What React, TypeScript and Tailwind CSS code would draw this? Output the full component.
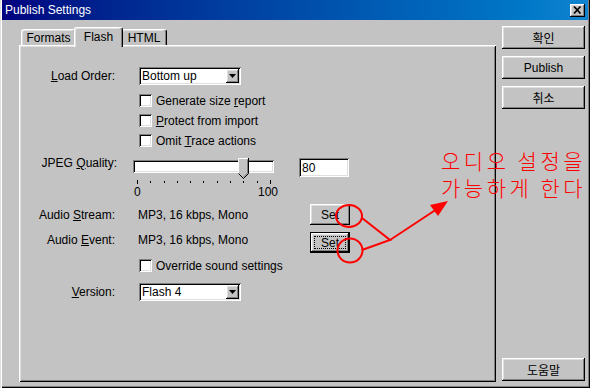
import type { ReactNode } from "react";

const RAISED =
  "shadow-[inset_-1px_-1px_#000,inset_1px_1px_#fff,inset_-2px_-2px_#808080,inset_2px_2px_#dfdfdf]";
const SUNKEN =
  "shadow-[inset_1px_1px_#808080,inset_-1px_-1px_#fff,inset_2px_2px_#000,inset_-2px_-2px_#dfdfdf]";

function WinButton({ children, ko = false }: { children: ReactNode; ko?: boolean }) {
  return (
    <button
      type="button"
      className={`flex h-[23px] w-[83px] items-center justify-center bg-[#c3c3c3] text-[12px] text-black ${RAISED} ${
        ko ? "font-['Noto_Sans_CJK_KR',sans-serif]" : ""
      }`}
    >
      {children}
    </button>
  );
}

function SetButton({ isDefault = false }: { isDefault?: boolean }) {
  if (isDefault) {
    return (
      <button type="button" className="flex h-[21px] w-[40px] border border-black bg-[#c3c3c3] p-0">
        <span className={`flex flex-1 items-center justify-center p-[3px] ${RAISED}`}>
          <span className="flex h-full w-full items-center justify-center border border-dotted border-black leading-none">
            Set
          </span>
        </span>
      </button>
    );
  }
  return (
    <button type="button" className={`flex h-[21px] w-[40px] items-center justify-center bg-[#c3c3c3] ${RAISED}`}>
      Set
    </button>
  );
}

function Checkbox({ children }: { children: ReactNode }) {
  return (
    <div className="flex h-[13px] items-center gap-[4px]">
      <span className={`h-[13px] w-[13px] shrink-0 bg-white ${SUNKEN}`} />
      <span className="whitespace-nowrap leading-[14px]">{children}</span>
    </div>
  );
}

function Select({ value }: { value: string }) {
  return (
    <div className={`flex h-[18px] w-[102px] bg-white p-[2px] ${SUNKEN}`}>
      <span className="flex flex-1 items-center pl-[1px] leading-none">{value}</span>
      <span className={`flex w-[13px] items-center justify-center bg-[#c3c3c3] ${RAISED}`}>
        <svg width="7" height="4" viewBox="0 0 7 4">
          <path d="M0 0H7L3.5 4Z" fill="#000" />
        </svg>
      </span>
    </div>
  );
}

function Slider() {
  const ticks = Array.from({ length: 11 }, (_, i) => i);
  return (
    <div className="ml-[16px] mt-[4px] w-[141px]">
      <div className={`relative h-[13px] bg-white ${SUNKEN}`}>
        <svg className="absolute left-[105px] top-[-2px]" width="11" height="21" viewBox="0 0 11 21">
          <path d="M0 0H11V15.5L5.5 21L0 15.5Z" fill="#c3c3c3" />
          <path d="M0.5 15.5V0.5H10" stroke="#fff" fill="none" />
          <path d="M10.5 0V15.5L5.5 20.5L0.5 15.5" stroke="#000" fill="none" />
          <path d="M9.5 1.5V15L5.5 19" stroke="#808080" fill="none" />
        </svg>
      </div>
      <div className="mt-[7px] flex h-[4px] items-center justify-between pl-[4px] pr-[3px]">
        {ticks.map((t) => (
          <span key={t} className={`w-px bg-black ${t === 0 || t === 10 ? "h-[4px]" : "h-[2px]"}`} />
        ))}
      </div>
      <div className="-mr-[4px] mt-[1px] flex justify-between pl-[1px] leading-[14px]">
        <span>0</span>
        <span>100</span>
      </div>
    </div>
  );
}

function Tab({ label, active = false, className = "" }: { label: string; active?: boolean; className?: string }) {
  return (
    <div
      className={`flex items-center justify-center rounded-t-[3px] border-l border-r border-t border-l-white border-r-black border-t-white bg-[#c3c3c3] shadow-[inset_-1px_0_#808080,inset_1px_1px_#dfdfdf] ${
        active ? "relative z-10 -mb-[2px] h-[20px] pb-[2px]" : "h-[16px]"
      } ${className}`}
    >
      {label}
    </div>
  );
}

export default function App() {
  return (
    <div className="relative h-[388px] w-[590px] overflow-hidden bg-[#c3c3c3] font-['Liberation_Sans',sans-serif] text-[12px] text-black">
      <div className="flex h-full flex-col px-[2px] pb-[2px] shadow-[inset_1px_0_#dfdfdf,inset_2px_0_#fff,inset_-1px_-1px_#000,inset_-2px_-2px_#808080]">
        {/* title bar */}
        <div className="flex h-[20px] shrink-0 items-center justify-between bg-linear-to-r from-[#000080] to-[#1084d0] pl-[3px] pr-[3px]">
          <span className="text-[12px] text-white">Publish Settings</span>
          <span className={`flex h-[13px] w-[15px] items-center justify-center bg-[#c3c3c3] ${RAISED}`}>
            <svg width="9" height="8" viewBox="0 0 9 8">
              <path d="M1 0.5L7.5 7.5M7.5 0.5L1 7.5" stroke="#000" strokeWidth="1.7" />
            </svg>
          </span>
        </div>

        {/* body */}
        <div className="flex flex-1 gap-[6px] pl-[17px] pr-[3px]">
          <div className="flex flex-1 flex-col pb-[4px] pt-[7px]">
            <div className="flex h-[18px] items-end pl-[2px]">
              <Tab label="Formats" className="w-[55px] pt-[1px]" />
              <Tab label="Flash" active className="-mx-[2px] w-[49px]" />
              <Tab label="HTML" className="w-[46px] pt-[1px]" />
            </div>

            <div className="relative flex flex-1 flex-col pt-[22px] shadow-[inset_1px_1px_#fff,inset_-1px_-1px_#000,inset_2px_2px_#dfdfdf,inset_-2px_-2px_#808080]">
              <div className="flex h-[18px] items-center">
                <span className="w-[96px] text-right">
                  <u>L</u>oad Order:
                </span>
                <div className="ml-[24px]">
                  <Select value="Bottom up" />
                </div>
              </div>

              <div className="mt-[9px] flex flex-col gap-[7px] pl-[120px]">
                <Checkbox>
                  Generate size <u>r</u>eport
                </Checkbox>
                <Checkbox>
                  <u>P</u>rotect from import
                </Checkbox>
                <Checkbox>
                  Omit <u>T</u>race actions
                </Checkbox>
              </div>

              <div className="mt-[9px] flex items-start">
                <span className="w-[98px] text-right leading-[14px]">
                  JPEG <u>Q</u>uality:
                </span>
                <Slider />
                <div className={`ml-[25px] mt-[2px] flex h-[19px] w-[50px] items-center bg-white pl-[3px] ${SUNKEN}`}>
                  80
                </div>
              </div>

              <div className="mt-[5px] flex h-[21px] items-center">
                <span className="w-[96px] text-right">
                  Audio <u>S</u>tream:
                </span>
                <span className="ml-[23px] w-[172px]">MP3, 16 kbps, Mono</span>
                <SetButton />
              </div>

              <div className="mt-[7px] flex h-[21px] items-start">
                <span className="w-[96px] pt-[1px] text-right leading-[14px]">
                  Audio <u>E</u>vent:
                </span>
                <span className="ml-[23px] w-[172px] pt-[1px] leading-[14px]">MP3, 16 kbps, Mono</span>
                <SetButton isDefault />
              </div>

              <div className="mt-[6px] pl-[120px]">
                <Checkbox>Override sound settings</Checkbox>
              </div>

              <div className="mt-[11px] flex h-[18px] items-center">
                <span className="w-[96px] text-right">
                  <u>V</u>ersion:
                </span>
                <div className="ml-[24px]">
                  <Select value="Flash 4" />
                </div>
              </div>
            </div>
          </div>

          <div className="flex w-[83px] flex-col gap-[7px] pb-[5px] pt-[6px]">
            <WinButton ko>확인</WinButton>
            <WinButton>Publish</WinButton>
            <WinButton ko>취소</WinButton>
            <div className="mt-auto">
              <WinButton ko>도움말</WinButton>
            </div>
          </div>
        </div>
      </div>

      {/* red annotation drawn over the dialog */}
      <svg className="pointer-events-none absolute left-0 top-0" width="590" height="388" viewBox="0 0 590 388">
        <g stroke="#ff0000" strokeWidth="2" fill="none">
          <ellipse cx="349" cy="216" rx="13" ry="11" />
          <ellipse cx="350" cy="250.5" rx="12.5" ry="12" />
          <path d="M362 218L390 240L362 250" />
          <path d="M390 240L437 209" />
        </g>
        <path d="M448 201L430 205L438 216Z" fill="#ff0000" />
      </svg>
      <div className="pointer-events-none absolute left-[441px] top-[147px] whitespace-pre font-['Noto_Sans_CJK_KR',sans-serif] text-[21px] font-light leading-[27px] tracking-[3.5px] text-[#ff0000]">
        {"오디오 설정을\n가능하게 한다"}
      </div>
    </div>
  );
}
